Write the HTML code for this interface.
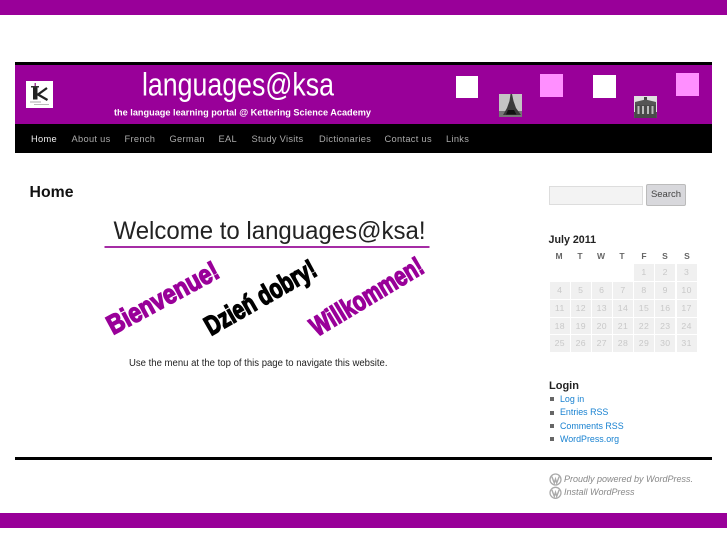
<!DOCTYPE html>
<html lang="en"><head><meta charset="utf-8"><title>languages@ksa</title>
<style>
html,body{margin:0;padding:0;background:#fff;width:727px;height:545px;overflow:hidden}
body{position:relative;font-family:"Liberation Sans",sans-serif;filter:blur(.3px)}
.a{position:absolute}
.t{position:absolute;white-space:nowrap;line-height:12px}
.n{top:133px;font-size:9.3px;letter-spacing:.3px;color:#aaa}
.d{position:absolute;width:20px;height:16.5px;background:#f0f0f0;color:#c8c8c8;font-size:8.7px;letter-spacing:.4px;line-height:17px;text-align:center}
.h{position:absolute;top:251px;width:20px;text-align:center;font-size:8.5px;font-weight:bold;color:#666;line-height:10px}
.l{position:absolute;left:560px;font-size:8.9px;color:#1982d1;line-height:12px;white-space:nowrap}
.b{position:absolute;left:549.5px;width:4px;height:4px;background:#666}
.f{position:absolute;left:564px;font-size:9px;font-style:italic;color:#888;line-height:12px;white-space:nowrap}
</style></head><body>
<div class="a" style="left:0;top:0;width:727px;height:14.5px;background:#990099"></div>
<div class="a" style="left:0;top:513px;width:727px;height:14.5px;background:#990099"></div>

<div class="a" style="left:15px;top:61.5px;width:697px;height:3px;background:#000"></div>
<div class="a" style="left:15px;top:64.5px;width:697px;height:59.5px;background:#990099"></div>
<div class="a" style="left:15px;top:124px;width:697px;height:28.5px;background:#000"></div>

<svg class="a" style="left:26px;top:81px" width="27" height="27" viewBox="0 0 27 27">
<rect width="27" height="27" fill="#fff"/>
<path d="M7 5.500h4.500v13h-4.500z" fill="#222"/>
<path d="M5 5h8v1.500h-8z" fill="#333"/>
<path d="M8.500 2h1.500v3h-1.500z" fill="#a0409a"/>
<path d="M21 7l-9 6.500 9.500 5.500" stroke="#222" stroke-width="2.300" fill="none"/>
<rect x="4" y="20.500" width="11" height="1" fill="#aaa"/>
<rect x="8" y="23" width="15" height="1" fill="#bbb"/>
</svg>

<svg class="a" style="left:0;top:60px" width="727" height="70">
<text x="142" y="35.500" font-family="'Liberation Sans',sans-serif" font-size="32" fill="#fff" textLength="192" lengthAdjust="spacingAndGlyphs">languages@ksa</text>
<text x="114" y="55.500" font-family="'Liberation Sans',sans-serif" font-size="9" font-weight="bold" fill="#fff" textLength="257" lengthAdjust="spacingAndGlyphs">the language learning portal @ Kettering Science Academy</text>
</svg>

<div class="a" style="left:455.5px;top:75.5px;width:22.5px;height:22.5px;background:#fff"></div>
<div class="a" style="left:540px;top:74px;width:22.5px;height:22.5px;background:#ff8fff"></div>
<div class="a" style="left:593px;top:75px;width:22.5px;height:22.5px;background:#fff"></div>
<div class="a" style="left:676px;top:73px;width:22.5px;height:22.5px;background:#ff8fff"></div>

<svg class="a" style="left:498.500px;top:94px" width="23" height="23" viewBox="0 0 23 23">
<rect width="23" height="23" fill="#c4c4c4"/>
<rect y="17" width="23" height="6" fill="#777"/>
<path d="M11.500 0h1.500l1.500 7 2.500 7 5 7h-18l4-7 2.500-7z" fill="#3a3a3a"/>
<path d="M9 16h6l2.500 4.500h-10.500z" fill="#111"/>
</svg>
<svg class="a" style="left:634px;top:95.500px" width="23" height="22.500" viewBox="0 0 23 22.500">
<rect width="23" height="22.500" fill="#e0e0e0"/>
<rect y="16" width="23" height="6.500" fill="#555"/>
<path d="M10 1h3v3h-3z" fill="#444"/>
<path d="M1 6l10.500-2.500 10.500 2.500v3h-21z" fill="#555"/>
<rect x="1" y="9" width="21" height="13.500" fill="#4a4a4a"/>
<path d="M4.500 10v8M9 10v8M14 10v8M18.500 10v8" stroke="#bbb" stroke-width="2"/>
</svg>

<div class="t n" style="left:31px;color:#eee">Home</div>
<div class="t n" style="left:71.500px">About us</div>
<div class="t n" style="left:124.500px">French</div>
<div class="t n" style="left:169.500px">German</div>
<div class="t n" style="left:218.500px">EAL</div>
<div class="t n" style="left:251.500px">Study Visits</div>
<div class="t n" style="left:319px">Dictionaries</div>
<div class="t n" style="left:384.500px">Contact us</div>
<div class="t n" style="left:446px">Links</div>

<div class="t" style="left:29.500px;top:186px;font-size:15.800px;font-weight:bold;color:#111;letter-spacing:.05px;line-height:14px">Home</div>

<svg class="a" style="left:0;top:200px" width="540" height="180">
<text x="113.500" y="39" font-family="'Liberation Sans',sans-serif" font-size="25" fill="#222" textLength="312" lengthAdjust="spacingAndGlyphs">Welcome to languages@ksa!</text>
<rect x="104.500" y="46" width="325" height="2" fill="#a52ca5"/>
<g font-family="'Liberation Sans',sans-serif" font-weight="bold" font-size="27" stroke-width="1.500">
<text transform="translate(113 135) rotate(-28.400)" fill="#990099" stroke="#990099" textLength="123" lengthAdjust="spacingAndGlyphs">Bienvenue!</text>
<text transform="translate(211 136) rotate(-29.700)" fill="#000" stroke="#000" textLength="124" lengthAdjust="spacingAndGlyphs">Dzień dobry!</text>
<text transform="translate(317 137) rotate(-31)" fill="#990099" stroke="#990099" textLength="127" lengthAdjust="spacingAndGlyphs">Willkommen!</text>
</g>
<text x="129" y="166" font-family="'Liberation Sans',sans-serif" font-size="10" fill="#222" textLength="258.500" lengthAdjust="spacingAndGlyphs">Use the menu at the top of this page to navigate this website.</text>
</svg>

<div class="a" style="left:549px;top:186px;width:92px;height:16.500px;background:#f3f3f3;border:1px solid #ddd"></div>
<div class="a" style="left:646px;top:184px;width:38px;height:20px;background:#d8d8dc;border:1px solid #bbb;border-radius:2px;font-size:9.500px;line-height:20px;text-align:center;color:#444">Search</div>

<div class="t" style="left:548.500px;top:234px;font-size:10.700px;font-weight:bold;color:#222">July 2011</div>
<div class="h" style="left:549px">M</div><div class="h" style="left:570px">T</div><div class="h" style="left:591px">W</div><div class="h" style="left:612px">T</div><div class="h" style="left:634px">F</div><div class="h" style="left:655px">S</div><div class="h" style="left:677px">S</div>

<div class="d" style="left:634px;top:264px">1</div><div class="d" style="left:655.300px;top:264px">2</div><div class="d" style="left:676.600px;top:264px">3</div>
<div class="d" style="left:549.800px;top:282px">4</div><div class="d" style="left:570.800px;top:282px">5</div><div class="d" style="left:591.800px;top:282px">6</div><div class="d" style="left:613px;top:282px">7</div><div class="d" style="left:634px;top:282px">8</div><div class="d" style="left:655.300px;top:282px">9</div><div class="d" style="left:676.600px;top:282px">10</div>
<div class="d" style="left:549.800px;top:300px">11</div><div class="d" style="left:570.800px;top:300px">12</div><div class="d" style="left:591.800px;top:300px">13</div><div class="d" style="left:613px;top:300px">14</div><div class="d" style="left:634px;top:300px">15</div><div class="d" style="left:655.300px;top:300px">16</div><div class="d" style="left:676.600px;top:300px">17</div>
<div class="d" style="left:549.800px;top:317.500px">18</div><div class="d" style="left:570.800px;top:317.500px">19</div><div class="d" style="left:591.800px;top:317.500px">20</div><div class="d" style="left:613px;top:317.500px">21</div><div class="d" style="left:634px;top:317.500px">22</div><div class="d" style="left:655.300px;top:317.500px">23</div><div class="d" style="left:676.600px;top:317.500px">24</div>
<div class="d" style="left:549.800px;top:335px">25</div><div class="d" style="left:570.800px;top:335px">26</div><div class="d" style="left:591.800px;top:335px">27</div><div class="d" style="left:613px;top:335px">28</div><div class="d" style="left:634px;top:335px">29</div><div class="d" style="left:655.300px;top:335px">30</div><div class="d" style="left:676.600px;top:335px">31</div>

<div class="t" style="left:549px;top:379.500px;font-size:11px;font-weight:bold;color:#222">Login</div>
<div class="b" style="top:397px"></div><div class="l" style="top:393px">Log in</div>
<div class="b" style="top:410.500px"></div><div class="l" style="top:406px">Entries RSS</div>
<div class="b" style="top:424px"></div><div class="l" style="top:419.500px">Comments RSS</div>
<div class="b" style="top:437px"></div><div class="l" style="top:433px">WordPress.org</div>

<div class="a" style="left:15px;top:457px;width:697px;height:3px;background:#000"></div>

<svg class="a" style="left:548.500px;top:472.500px" width="13" height="26" viewBox="0 0 13 26" fill="none">
<circle cx="6.500" cy="6.500" r="5.500" stroke="#aaa" stroke-width="1.300"/>
<path d="M2.800 3.500l2.500 6.500 1.200-4 1.200 4 2.500-6.500" stroke="#aaa" stroke-width="1.400"/>
<circle cx="6.500" cy="19.800" r="5.500" stroke="#aaa" stroke-width="1.300"/>
<path d="M2.800 16.800l2.500 6.500 1.200-4 1.200 4 2.500-6.500" stroke="#aaa" stroke-width="1.400"/>
</svg>
<div class="f" style="top:473px">Proudly powered by WordPress.</div>
<div class="f" style="top:486px">Install WordPress</div>
</body></html>
